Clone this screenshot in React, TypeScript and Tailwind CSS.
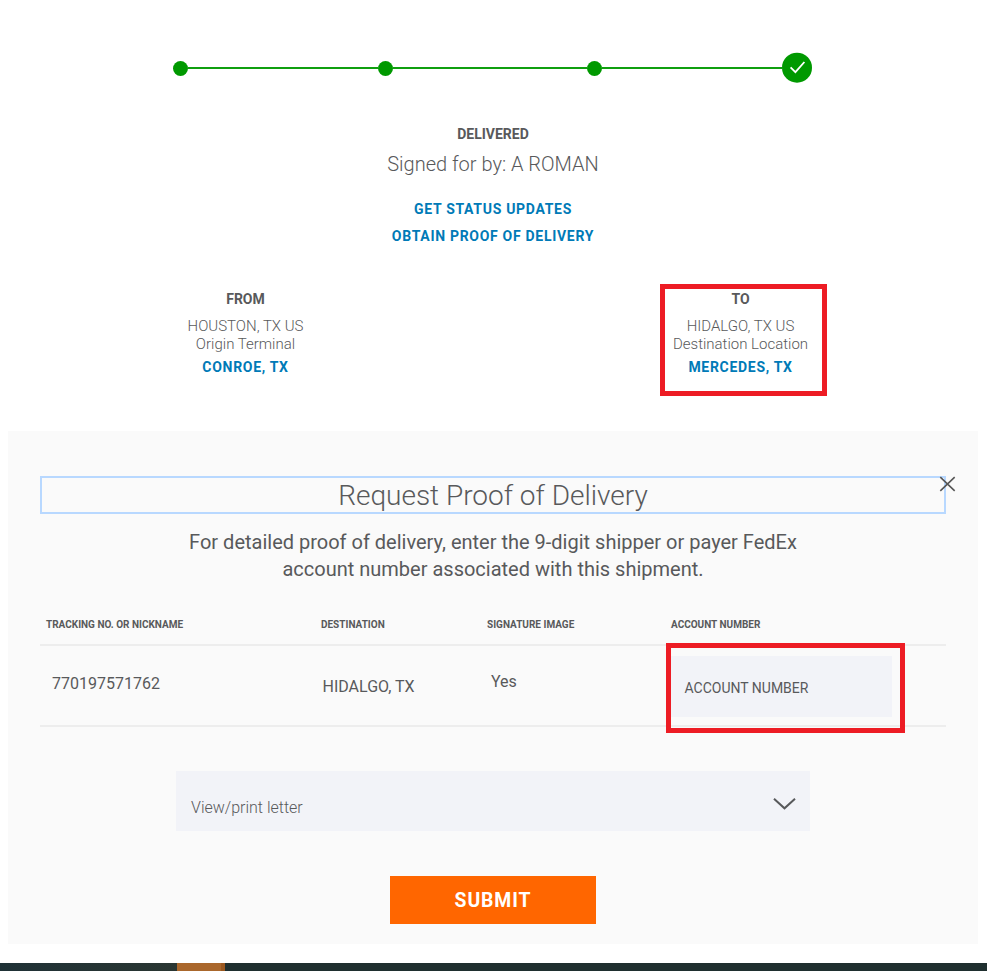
import React from "react";

const Dot = () => <span className="mt-px size-[15px] shrink-0 rounded-full bg-[#009900]" />;
const Line = ({ className }: { className: string }) => (
  <span className={`mt-px h-[2px] bg-[#0f9f0f] ${className}`} />
);

function Tracker() {
  return (
    <div className="flex h-[31px] items-center pl-[173px]">
      <Dot />
      <Line className="w-[190px]" />
      <Dot />
      <Line className="w-[194px]" />
      <Dot />
      <Line className="w-[180px]" />
      <svg width="30" height="31" viewBox="0 0 30 31" fill="none">
        <circle cx="15" cy="15.7" r="15" fill="#009900" />
        <path d="M8.6 15.4 L13.4 20.2 L22.4 10" stroke="#fff" strokeWidth="1.8" />
      </svg>
    </div>
  );
}

type PlaceProps = { label: string; city: string; kind: string; link: string; marked?: boolean };

function Place({ label, city, kind, link, marked }: PlaceProps) {
  return (
    <div className={`relative flex h-28 w-[167px] flex-col items-center pt-[5px] text-center ${marked ? "pr-[6px]" : ""}`}>
      {marked && <span className="absolute inset-0 border-5 border-[#ed1c24]" />}
      <h3 className="text-sm leading-5 font-bold">{label}</h3>
      <p className="mt-2 text-[15px] leading-[18px] font-light whitespace-nowrap">
        {city}
        <br />
        {kind}
      </p>
      <a className="mt-[4px] text-sm leading-5 font-bold tracking-[0.7px] text-[#007ab7]">{link}</a>
    </div>
  );
}

function ProofPanel() {
  return (
    <section className="relative ml-2 flex h-[513px] w-[970px] flex-col items-center bg-[#fafafa] px-8 pt-[45px]">
      <h2 className="h-[38px] w-full border-2 border-[#b8d8ff] text-center text-[28px] leading-[35px] font-light">
        Request Proof of Delivery
      </h2>
      <svg className="absolute top-[45px] left-[931px]" width="17" height="16" viewBox="0 0 17 16" fill="none">
        <path d="M1.3 1.2 L15.7 14.8 M15.7 1.2 L1.3 14.8" stroke="#555" strokeWidth="1.6" />
      </svg>
      <p className="mt-[15px] text-center text-xl leading-[27px]">
        For detailed proof of delivery, enter the 9-digit shipper or payer FedEx
        <br />
        account number associated with this shipment.
      </p>

      <div className="mt-[32px] grid w-full grid-cols-[275px_166px_184px_281px] text-[10px] leading-5 font-bold">
        <span className="pl-[6px]">TRACKING NO. OR NICKNAME</span>
        <span className="pl-[6px]">DESTINATION</span>
        <span className="pl-[6px]">SIGNATURE IMAGE</span>
        <span className="pl-[6px]">ACCOUNT NUMBER</span>
      </div>
      <div className="mt-[9px] grid h-[83px] w-full grid-cols-[275px_166px_184px_281px] border-y-2 border-[#ededed] text-base leading-5">
        <span className="pt-[28px] pl-3">770197571762</span>
        <span className="pt-[31px] pl-[7.5px]">HIDALGO, TX</span>
        <span className="pt-[26px] pl-[10px]">Yes</span>
        <div className="relative pt-[10px] pl-[6px]">
          <div className="flex h-[61px] w-[221px] items-center bg-[#f2f3f8] pt-[3px] pl-[13.5px] text-sm">
            ACCOUNT NUMBER
          </div>
          <span className="absolute top-[-3px] left-[1px] h-[90px] w-[239px] border-5 border-[#ed1c24]" />
        </div>
      </div>

      <div className="mt-[44px] flex h-[60px] w-[634px] items-center justify-between bg-[#f2f3f8] pr-[14px] pl-[15px]">
        <span className="pt-[13px] text-base leading-5 font-light">View/print letter</span>
        <svg className="mt-[6px]" width="24" height="14" viewBox="0 0 24 14" fill="none">
          <path d="M2 1.7 L12.5 11.3 L23 1.7" stroke="#58595b" strokeWidth="2" />
        </svg>
      </div>
      <button className="mt-[45px] h-12 w-[206px] bg-[#ff6600] pt-px text-[19.4px] font-bold tracking-[0.9px] text-white">
        SUBMIT
      </button>
    </section>
  );
}

export default function App() {
  return (
    <main className="flex h-[971px] w-[987px] flex-col overflow-hidden bg-white pt-[52px] font-['Roboto',sans-serif] text-[#58595b]">
      <Tracker />
      <div className="mt-[41px] flex flex-col items-center pr-px">
        <h1 className="text-sm leading-5 font-bold">DELIVERED</h1>
        <p className="mt-[7px] text-xl leading-[26px] font-light">Signed for by: A ROMAN</p>
        <a className="mt-[22px] text-sm leading-5 font-bold tracking-[0.7px] text-[#007ab7]">GET STATUS UPDATES</a>
        <a className="mt-[7px] text-sm leading-5 font-bold tracking-[0.7px] text-[#007ab7]">OBTAIN PROOF OF DELIVERY</a>
      </div>
      <div className="mt-[38px] mb-[35px] flex justify-between pr-[160px] pl-[162px]">
        <Place label="FROM" city="HOUSTON, TX US" kind="Origin Terminal" link="CONROE, TX" />
        <Place label="TO" city="HIDALGO, TX US" kind="Destination Location" link="MERCEDES, TX" marked />
      </div>
      <ProofPanel />
      <footer className="mt-[19px] flex h-2 bg-[#1f2f2f]">
        <span className="w-[177px] bg-linear-to-r from-[#1f3136] to-[#2a3632]" />
        <span className="w-11 bg-[#aa672c]" />
        <span className="w-1 bg-[#9a5820]" />
      </footer>
    </main>
  );
}
